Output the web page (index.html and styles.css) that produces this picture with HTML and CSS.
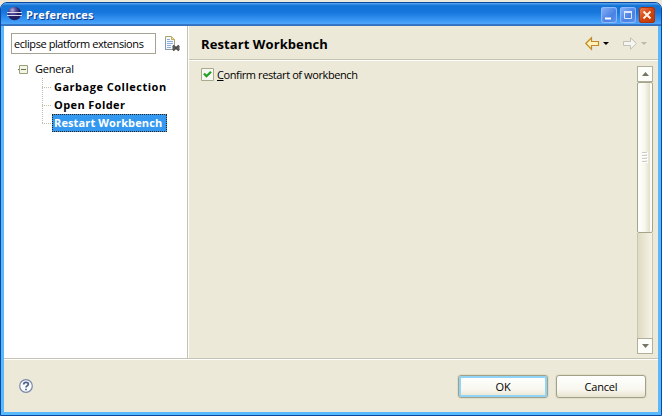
FILE: index.html
```html
<!DOCTYPE html>
<html lang="en">
<head>
<meta charset="utf-8">
<title>Preferences</title>
<link rel="stylesheet" href="styles.css">
</head>
<body>
<div class="window">
  <header class="titlebar">
    <svg class="logo" width="16" height="16" viewBox="0 0 16 16">
      <defs><radialGradient id="orb" cx=".35" cy=".25"><stop offset="0" stop-color="#b8b2dc"/><stop offset=".5" stop-color="#594f99"/><stop offset="1" stop-color="#252063"/></radialGradient></defs>
      <circle cx="7.5" cy="7.5" r="6.8" fill="url(#orb)"/>
      <path d="M0 6.500h15M0 9.500h15" stroke="#dcdaf2" stroke-width="1"/>
    </svg>
    <h1 class="caption">Preferences</h1>
    <div class="controls">
      <button class="control"><svg width="16" height="16"><path d="M4 11.500h6" stroke="#fff" stroke-width="2"/></svg></button>
      <button class="control"><svg width="16" height="16"><path d="M4.500 4.500h7v7h-7z" fill="none" stroke="#d9e7ff"/><path d="M4 5h8" stroke="#d9e7ff" stroke-width="2"/></svg></button>
      <button class="control close"><svg width="16" height="16"><path d="M4.500 4.500l7 7m0-7l-7 7" stroke="#fff3e8" stroke-width="2"/></svg></button>
    </div>
  </header>
  <main class="panes">
    <aside class="sidebar">
      <div class="filter">
        <input class="filter-input" type="text" value="eclipse platform extensions">
        <svg class="clear" width="17" height="16" viewBox="0 0 17 16">
          <path d="M1.500 .5h6l3 3v10h-9z" fill="#f5f9ff" stroke="#a9a474"/>
          <path d="M1.500 5v8.500h5" fill="none" stroke="#8595b5"/>
          <path d="M7.500 .5v3h3" fill="#f3dc8f" stroke="#c5ac5c"/>
          <path d="M3 3.500h3M3 5.500h6M3 7.500h6M3 9.500h4M3 11.500h4" stroke="#8facd6"/>
          <path d="M9 9.500l6 5m0-5l-6 5" stroke="#4c4c4c" stroke-width="2"/>
          <path d="M8.500 10h2v4h-2zM13.500 10h2v4h-2z" fill="#5b5b5b"/>
        </svg>
      </div>
      <div class="tree">
        <div class="branch"><svg class="toggle" width="10" height="9"><path d="M1.500 .5h8v8h-8z" fill="#f4f4e8" stroke="#98a078"/><path d="M0 4.500h1M3 4.500h5" stroke="#69744d"/></svg><span class="root">General</span></div>
        <ul class="children">
          <li><span class="leaf garbage">Garbage Collection</span></li>
          <li><span class="leaf folder">Open Folder</span></li>
          <li><span class="leaf selected">Restart Workbench</span></li>
        </ul>
      </div>
    </aside>
    <section class="page">
      <div class="page-head">
        <h2>Restart Workbench</h2>
        <svg class="history" width="66" height="16" viewBox="0 0 66 16">
          <path d="M.8 7.500L6.500 1.800V5.500h7v4h-7v3.700z" fill="#fff2bd" stroke="#c28a22" stroke-width="1.200"/>
          <path d="M18 6h6l-3 3z" fill="#000"/>
          <path d="M51.500 7.500L45.500 1.800V5.500h-7v4h7v3.700z" fill="#f7f5f0" stroke="#c3c0b9"/>
          <path d="M56 6h6l-3 3z" fill="#bcb9ae"/>
        </svg>
      </div>
      <div class="page-body">
        <label class="option"><svg width="13" height="13"><path d="M.5 .5h12v12H.5z" fill="#f8f8f2" stroke="#a5ab8c"/><path d="M3 5.500l2.500 2.700L10 3.800" fill="none" stroke="#21a121" stroke-width="2.300"/></svg><span class="option-text"><u>C</u>onfirm restart of workbench</span></label>
        <div class="scrollbar">
          <div class="step"><svg width="15" height="14"><path d="M4 9h7L7.500 5z" fill="#777463"/></svg></div>
          <div class="thumb"><svg width="15" height="12"><path d="M4 1h6M4 4h6M4 7h6M4 10h6" stroke="#fff" stroke-width="2"/><path d="M4 .5h5M4 3.500h5M4 6.500h5M4 9.500h5" stroke="#cbcaca"/></svg></div>
          <div class="track"></div>
          <div class="step"><svg width="15" height="14"><path d="M4 5h7L7.500 9z" fill="#777463"/></svg></div>
        </div>
      </div>
    </section>
  </main>
  <footer class="footer">
    <svg class="help" width="14" height="14" viewBox="0 0 14 14"><circle cx="7" cy="7" r="6.300" fill="#fafbff" stroke="#7888a8" stroke-width="1.200"/><path d="M4.700 5.500c0-3 4.700-2.800 4.700-.2C9.400 6.800 7 6.700 7 8.600M7 9.800v1.500" fill="none" stroke="#4c6186" stroke-width="1.700"/></svg>
    <button class="button default">OK</button>
    <button class="button cancel">Cancel</button>
  </footer>
</div>
</body>
</html>
```
FILE: styles.css
```css
* { box-sizing: border-box; }
html { background: #ece9d8; }
body { margin: 0; width: 662px; height: 416px; padding-top: 2px; overflow: hidden; font: 11px/16px "Open Sans", sans-serif; color: #000; }
svg { display: block; flex: none; }
h1, h2, ul { margin: 0; padding: 0; }
.window { width: 662px; height: 414px; display: flex; flex-direction: column; border: 1px solid #0b48a4; border-radius: 7px 7px 0 0; background: #58b9fd; overflow: hidden; padding: 0 3px 3px; }
.titlebar { flex: none; height: 23px; margin: 0 -3px; padding: 0 6px 0 6px; display: flex; align-items: center; background: linear-gradient(#5fa9f0, #1373d5 12%, #1676dc 40%, #3b99f5 78%, #4ba5fa 90%, #3577c8 92%, #326ebe); }
.logo { margin-top: -1px; }
.caption { margin-left: 3px; font: bold 11px/16px "Open Sans", sans-serif; letter-spacing: .2px; color: #fff; text-shadow: 1px 1px #0c3b91; }
.controls { margin-left: auto; display: flex; gap: 3px; }
.control { width: 16px; height: 16px; padding: 0; border: 0; border-radius: 3px; box-shadow: inset 0 0 0 1px #8db8fb; background: linear-gradient(135deg, #8bb4f7, #4a81e3 60%, #5f97ee); }
.close { background: linear-gradient(135deg, #f18858, #d4420d 50%, #b83c0c); box-shadow: inset 0 0 0 1px #a73311; }
.panes { flex: none; height: 333px; display: flex; border-bottom: 1px solid #c5c2b2; background: #ece9d8; }
.sidebar { width: 184px; flex: none; background: #fff; border-right: 1px solid #c5c2b2; }
.filter { display: flex; padding: 7px 0 0 7px; }
.filter-input { width: 145px; height: 21px; padding: 0 2px; border: 1px solid #a5a391; background: #fff; font: 11px/16px "Open Sans", sans-serif; letter-spacing: -.42px; outline: 0; }
.clear { margin: 3px 0 0 8px; }
.tree { padding: 6px 0 0 14px; }
.branch { height: 18px; display: flex; align-items: center; }
.root { margin-left: 7px; letter-spacing: -.25px; }
.children { list-style: none; margin-left: 24px; height: 54px; background: repeating-linear-gradient(#c1bda8 0 1px, transparent 1px 2px) 0 0 / 1px 46px no-repeat; }
.children li { height: 18px; display: flex; align-items: center; padding-left: 10px; background: repeating-linear-gradient(90deg, #c1bda8 0 1px, transparent 1px 2px) 0 9px / 9px 1px no-repeat; }
.leaf { height: 18px; padding: 0 2px; line-height: 18px; font-weight: bold; white-space: nowrap; }
.garbage { letter-spacing: .5px; }
.folder { letter-spacing: .4px; }
.selected { width: 115px; letter-spacing: .13px; color: #fff; background: #3399f0; outline: 1px dotted #35210d; outline-offset: -1px; }
.page { flex: 1; display: flex; flex-direction: column; border-left: 1px solid #fff; }
.page-head { height: 36px; display: flex; align-items: center; justify-content: space-between; padding: 0 7px 0 12px; border-bottom: 1px solid #c5c2b2; box-shadow: 0 1px #fff; }
.page-head h2 { font: bold 13px/18px "Open Sans", sans-serif; letter-spacing: .09px; padding-top: 2px; }
.history { margin-top: 2px; }
.page-body { flex: 1; display: flex; justify-content: space-between; padding: 6px 5px 4px 12px; }
.option { display: flex; gap: 3px; height: 16px; align-items: center; }
.option-text { letter-spacing: -.4px; padding-top: 1px; }
.option u { text-underline-offset: 1px; }
.scrollbar { width: 16px; height: 288px; display: flex; flex-direction: column; background: #ece9d8; }
.step { flex: none; height: 16px; border: 1px solid #b1af9c; background: #fdfdf9; }
.thumb { flex: none; height: 151px; border: 1px solid #a4a58a; border-radius: 2px; display: flex; align-items: center; background: linear-gradient(90deg, #fff, #f9f8ef 45%, #e3dfc9 85%, #fff 90%); }
.track { flex: 1; border: solid #cbc6b2; border-width: 0 1px; background: linear-gradient(90deg, #dfdbc1, #f6f3e8); }
.footer { flex: 1; border-top: 1px solid #fff; background: #ece9d8; display: flex; align-items: flex-start; padding: 15px 12px 0 15px; }
.help { margin: 4px auto 0 0; }
.button { width: 90px; height: 23px; padding: 0; border: 1px solid #a1a185; border-radius: 3px; background: linear-gradient(#fff, #f8f7ef 65%, #e7e3cf); box-shadow: 0 0 0 1px #e0ddcb; font: 11px/16px "Open Sans", sans-serif; letter-spacing: -.2px; color: #000; }
.default { box-shadow: 0 0 0 1px #e0ddcb, inset 0 0 0 2px #90d5f8; }
.cancel { margin-left: 8px; }
```
